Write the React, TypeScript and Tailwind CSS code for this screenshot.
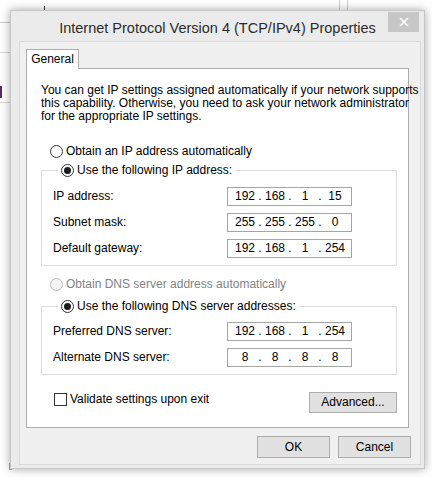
const ui = { fontFamily: '"Liberation Sans", Arial, sans-serif' };

function Radio({ checked = false, disabled = false }: { checked?: boolean; disabled?: boolean }) {
  return (
    <span
      className={`flex h-[13px] w-[13px] shrink-0 items-center justify-center rounded-full border ${
        disabled ? "border-[#bcbcbc] bg-[#f4f4f4]" : "border-[#333333] bg-white"
      }`}
    >
      {checked && <span className="h-[7px] w-[7px] rounded-full bg-[#1a1a1a]" />}
    </span>
  );
}

function RadioLabel({
  label,
  checked,
  disabled,
}: {
  label: string;
  checked?: boolean;
  disabled?: boolean;
}) {
  return (
    <span className="flex h-[14px] items-center gap-[3px]">
      <Radio checked={checked} disabled={disabled} />
      <span className={disabled ? "text-[#838383]" : "text-black"}>{label}</span>
    </span>
  );
}

// four-octet address box, each field centred like the Win32 IP control
function IpBox({ octets }: { octets: string[] }) {
  return (
    <div className="flex h-[19px] w-[125px] items-center border border-[#a5a5a5] bg-white pl-[4px] text-black">
      {octets.map((o, i) => (
        <div key={i} className="flex items-center">
          {i > 0 && <span className="w-[4px] text-center">.</span>}
          <span className="w-[26px] text-center">{o}</span>
        </div>
      ))}
    </div>
  );
}

function Row({ label, octets }: { label: string; octets: string[] }) {
  return (
    <div className="flex items-center justify-between pr-[44px]">
      <span>{label}</span>
      <IpBox octets={octets} />
    </div>
  );
}

function Group({
  legend,
  gap,
  children,
}: {
  legend: React.ReactNode;
  gap: string;
  children: React.ReactNode;
}) {
  return (
    <fieldset className="mr-[11px] border border-[#dcdcdc] pb-[7px] pl-[11px]">
      <legend className="ml-[5px] px-[3px]">{legend}</legend>
      <div className={`flex flex-col gap-[7px] ${gap}`}>{children}</div>
    </fieldset>
  );
}

function Button({ label, className = "" }: { label: string; className?: string }) {
  return (
    <div
      className={`flex items-center justify-center border border-[#adadad] bg-[#e1e1e1] text-[12px] text-black ${className}`}
    >
      {label}
    </div>
  );
}

export default function App() {
  return (
    <div className="relative h-[478px] w-[432px] overflow-hidden bg-white" style={ui}>
      {/* bits of the window underneath */}
      <div className="absolute left-0 top-[22px] h-px w-[10px] bg-[#c8c8c8]" />
      <div className="absolute left-0 top-[52px] h-px w-[10px] bg-[#d6d6d6]" />
      <div className="absolute left-0 top-[102px] h-px w-[10px] bg-[#d6d6d6]" />
      <div className="absolute left-0 top-[86px] h-[12px] w-[2px] bg-[#5a2a6a]" />
      <div className="absolute left-[10px] top-[12px] h-px w-[8px] bg-[#222]" />
      <div className="absolute left-[44px] top-[6px] h-[6px] w-px bg-[#333]" />
      <div className="absolute left-[339px] top-0 h-[10px] w-px bg-[#d0d0d0]" />
      <div className="absolute left-[347px] top-0 h-[10px] w-px bg-[#d0d0d0]" />
      <div className="absolute left-[9px] top-[463px] h-[7px] w-[3px] bg-[#f29b0c]" />

      {/* dialog window */}
      <div className="absolute left-[10px] top-[10px] flex h-[459px] w-[415px] flex-col border border-[#c6c6c6] bg-[#ebebeb] shadow-[0_0_9px_rgba(0,0,0,0.35)]">
        {/* title bar */}
        <div className="relative flex h-[30px] shrink-0 items-center justify-center pt-[5px]">
          <span className="text-[14.5px] text-[#2b2b2b]">Internet Protocol Version 4 (TCP/IPv4) Properties</span>
          <div className="absolute right-[5px] top-[1px] flex h-[20px] w-[31px] items-center justify-center bg-[#c7c7c7]">
            <svg width="10" height="10" viewBox="0 0 10 10">
              <path d="M1 1L9 9M9 1L1 9" stroke="#ffffff" strokeWidth="1.6" />
            </svg>
          </div>
        </div>

        {/* client area */}
        <div className="mb-[3px] ml-[8px] mr-[3px] flex flex-1 flex-col border border-[#dadada] bg-[#f0f0f0] pl-[6px] pr-[9px] pt-[7px] text-[12px] leading-[13px] text-black">
          {/* tab strip */}
          <div className="flex">
            <div className="relative z-10 -mb-px flex h-[20px] w-[53px] items-center justify-center border border-b-0 border-[#adadad] bg-white">
              General
            </div>
          </div>

          {/* tab page */}
          <div className="mr-[2px] flex h-[360px] flex-col border border-[#adadad] bg-white pl-[14px] pt-[15px]">
            <p className="whitespace-nowrap">
              You can get IP settings assigned automatically if your network supports
              <br />
              this capability. Otherwise, you need to ask your network administrator
              <br />
              for the appropriate IP settings.
            </p>

            <div className="mt-[21px] pl-[9px]">
              <RadioLabel label="Obtain an IP address automatically" />
            </div>

            <div className="mt-[5px]">
              <Group gap="mt-[10px]" legend={<RadioLabel label="Use the following IP address:" checked />}>
                <Row label="IP address:" octets={["192", "168", "1", "15"]} />
                <Row label="Subnet mask:" octets={["255", "255", "255", "0"]} />
                <Row label="Default gateway:" octets={["192", "168", "1", "254"]} />
              </Group>
            </div>

            <div className="mt-[11px] pl-[9px]">
              <RadioLabel label="Obtain DNS server address automatically" disabled />
            </div>

            <div className="mt-[8px]">
              <Group gap="mt-[9px]" legend={<RadioLabel label="Use the following DNS server addresses:" checked />}>
                <Row label="Preferred DNS server:" octets={["192", "168", "1", "254"]} />
                <Row label="Alternate DNS server:" octets={["8", "8", "8", "8"]} />
              </Group>
            </div>

            <div className="mt-[17px] flex items-start justify-between pr-[11px]">
              <div className="ml-[13px] mt-px flex items-center gap-[3px]">
                <span className="h-[13px] w-[13px] border border-[#333333] bg-white" />
                <span>Validate settings upon exit</span>
              </div>
              <Button label="Advanced..." className="h-[21px] w-[88px]" />
            </div>
          </div>

          {/* dialog buttons */}
          <div className="mt-[8px] flex justify-end gap-[8px]">
            <Button label="OK" className="h-[22px] w-[73px]" />
            <Button label="Cancel" className="h-[22px] w-[73px]" />
          </div>
        </div>
      </div>
    </div>
  );
}
